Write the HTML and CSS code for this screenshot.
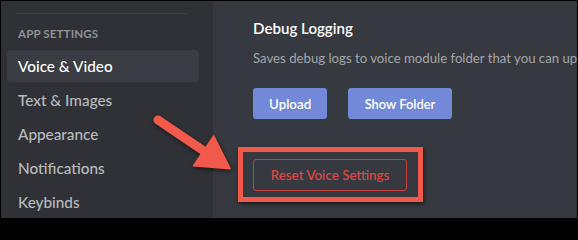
FILE: index.html
```html
<!DOCTYPE html>
<html lang="en">
<head>
<meta charset="utf-8">
<title>Voice & Video Settings</title>
<link rel="stylesheet" href="styles.css">
</head>
<body>
<div class="app">
  <nav class="sidebar">
    <div class="divider"></div>
    <div class="nav-header">App Settings</div>
    <div class="nav-item selected">Voice &amp; Video</div>
    <div class="nav-item">Text &amp; Images</div>
    <div class="nav-item">Appearance</div>
    <div class="nav-item">Notifications</div>
    <div class="nav-item">Keybinds</div>
  </nav>
  <main class="content">
    <h2 class="title">Debug Logging</h2>
    <p class="desc">Saves debug logs to voice module folder that you can upload for troubleshooting.</p>
    <div class="btn-row">
      <button class="btn btn-brand">Upload</button>
      <button class="btn btn-brand">Show Folder</button>
    </div>
    <div class="highlight">
      <button class="btn btn-danger">Reset Voice Settings</button>
    </div>
  </main>
  <svg class="arrow" width="578" height="221" viewBox="0 0 578 221" aria-hidden="true">
    <g transform="translate(158 120) rotate(34)">
      <line x1="0" y1="0" x2="58" y2="0" stroke="#f15a4b" stroke-width="9" stroke-linecap="round"/>
      <polygon points="55,-18 87,0 55,18" fill="#f15a4b" stroke="#f15a4b" stroke-width="1.5" stroke-linejoin="round"/>
    </g>
  </svg>
</div>
</body>
</html>
```
FILE: styles.css
```css
* { box-sizing: border-box; }
html, body { margin: 0; background: #000; }
body { width: 578px; height: 221px; overflow: hidden; font-family: "Lato", "Noto Sans", sans-serif; }

.app {
  position: relative;
  display: flex;
  width: 578px;
  height: 221px;
  border: 1px solid #000;
  border-left-width: 1px;
  border-bottom-width: 3px;
  overflow: hidden;
}

.sidebar {
  flex: 0 0 212px;
  background: #2f3136;
  padding: 0 14px 0 6px;
  display: flex;
  flex-direction: column;
}

.divider {
  height: 1px;
  margin: 12px 11px 0 9px;
  background: #3b3e44;
  flex: none;
}

.nav-header {
  margin-top: 12px;
  padding-left: 11px;
  height: 16px;
  line-height: 16px;
  font-size: 11.6px;
  font-weight: 700;
  text-transform: uppercase;
  color: #8e9297;
  letter-spacing: 0.1px;
  flex: none;
}

.nav-item {
  flex: none;
  height: 32px;
  line-height: 32px;
  margin-top: 2px;
  padding-left: 11px;
  border-radius: 4px;
  font-size: 15.3px;
  font-weight: 500;
  color: #b9bbbe;
  white-space: nowrap;
}
.nav-header + .nav-item { margin-top: 8px; }
.nav-item.selected { background: #393c43; color: #fff; }

.content {
  flex: 1;
  min-width: 0;
  background: #36393f;
  padding: 17px 0 0 40px;
  overflow: hidden;
}

.title {
  margin: 0;
  height: 20px;
  line-height: 20px;
  font-size: 15.1px;
  font-weight: 600;
  color: #fff;
}

.desc {
  margin: 11px 0 0;
  height: 18px;
  line-height: 18px;
  font-size: 13.2px;
  color: #a3a6aa;
  white-space: nowrap;
}

.btn-row {
  display: flex;
  gap: 21px;
  margin-top: 21px;
}

.btn {
  font-family: inherit;
  border: 0;
  border-radius: 3px;
  height: 31px;
  padding: 0 16px;
  font-size: 13.3px;
  font-weight: 600;
  cursor: pointer;
}
.btn-brand { background: #7289da; color: #fff; }
.btn-brand + .btn-brand { padding: 0 16.5px; font-size: 12.9px; }

.highlight {
  display: inline-flex;
  margin: 28px 0 0 -15px;
  padding: 7px 11px 6px 10px;
  border: 5px solid #f15a4b;
  box-shadow: 1px 2px 4px rgba(0, 0, 0, 0.55);
}

.btn-danger {
  width: 154px;
  height: 32px;
  padding: 0;
  background: transparent;
  border: 1px solid #c9403f;
  color: #e04848;
  font-size: 13.4px;
  font-weight: 500;
}

.arrow {
  position: absolute;
  left: -1px;
  top: -1px;
  pointer-events: none;
  filter: drop-shadow(1px 2px 2px rgba(0, 0, 0, 0.5));
}
```
